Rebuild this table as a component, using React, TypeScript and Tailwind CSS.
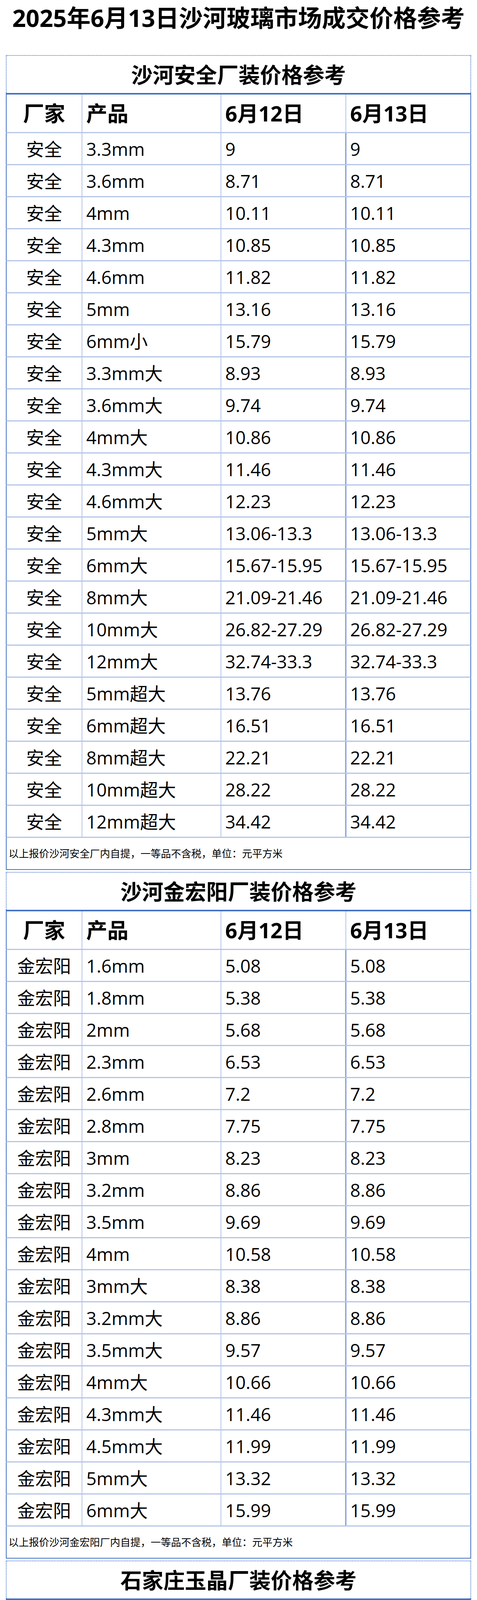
type Row = [string, string, string]

type Section = {
  title: string
  maker: string
  rows: Row[]
  note: string
}

const same = (p: string, v: string): Row => [p, v, v]

const SECTIONS: Section[] = [
  {
    title: "沙河安全厂装价格参考",
    maker: "安全",
    rows: [
      same("3.3mm", "9"),
      same("3.6mm", "8.71"),
      same("4mm", "10.11"),
      same("4.3mm", "10.85"),
      same("4.6mm", "11.82"),
      same("5mm", "13.16"),
      same("6mm小", "15.79"),
      same("3.3mm大", "8.93"),
      same("3.6mm大", "9.74"),
      same("4mm大", "10.86"),
      same("4.3mm大", "11.46"),
      same("4.6mm大", "12.23"),
      same("5mm大", "13.06-13.3"),
      same("6mm大", "15.67-15.95"),
      same("8mm大", "21.09-21.46"),
      same("10mm大", "26.82-27.29"),
      same("12mm大", "32.74-33.3"),
      same("5mm超大", "13.76"),
      same("6mm超大", "16.51"),
      same("8mm超大", "22.21"),
      same("10mm超大", "28.22"),
      same("12mm超大", "34.42"),
    ],
    note: "以上报价沙河安全厂内自提，一等品不含税，单位：元平方米",
  },
  {
    title: "沙河金宏阳厂装价格参考",
    maker: "金宏阳",
    rows: [
      same("1.6mm", "5.08"),
      same("1.8mm", "5.38"),
      same("2mm", "5.68"),
      same("2.3mm", "6.53"),
      same("2.6mm", "7.2"),
      same("2.8mm", "7.75"),
      same("3mm", "8.23"),
      same("3.2mm", "8.86"),
      same("3.5mm", "9.69"),
      same("4mm", "10.58"),
      same("3mm大", "8.38"),
      same("3.2mm大", "8.86"),
      same("3.5mm大", "9.57"),
      same("4mm大", "10.66"),
      same("4.3mm大", "11.46"),
      same("4.5mm大", "11.99"),
      same("5mm大", "13.32"),
      same("6mm大", "15.99"),
    ],
    note: "以上报价沙河金宏阳厂内自提，一等品不含税，单位：元平方米",
  },
  {
    title: "石家庄玉晶厂装价格参考",
    maker: "玉晶",
    rows: [
      ["4mm大", "10.66", "10.59"],
      ["4.3mm大", "11.46", "11.38"],
      ["5mm大", "13.32", "13.24"],
      ["6mm大", "15.99", "15.89"],
      ["7.2mm大", "19.19", "19.06"],
      ["7.5mm大", "19.98", "19.86"],
      ["8mm大", "21.5", "21.37"],
      ["10mm大", "27.12", "25.96"],
      ["12mm大", "33.1", "32.93"],
    ],
    note: "以上报价石家庄玉晶厂内自提，一等品不含税，单位：元平方米",
  },
]

function PriceTable({ section }: { section: Section }) {
  return (
    <div className="flex flex-col">
      <div className="h-[97px] flex items-center justify-center border-t-2 border-x-2 border-dotted border-[#4472c4]">
        <h2 className="text-[55px] font-bold leading-none">{section.title}</h2>
      </div>
      <div className="h-[4px] bg-[#4472c4]" />

      <div className="h-[99px] flex border-x-2 border-x-[#4472c4] border-b-[3px] border-b-[#b4c6e7] text-[54px] font-bold leading-none">
        <div className="w-[194px] flex items-center justify-center border-r-2 border-[#b4c6e7]">厂家</div>
        <div className="w-[356px] flex items-center pl-[10px] border-r-2 border-[#b4c6e7]">产品</div>
        <div className="w-[320px] flex items-center pl-[10px] border-r-2 border-[#b4c6e7]">6月12日</div>
        <div className="flex-1 flex items-center pl-[10px]">6月13日</div>
      </div>

      {section.rows.map(([product, d12, d13]) => (
        <div
          key={product}
          className="h-[82px] flex border-x-2 border-x-[#4472c4] border-b-[3px] border-b-[#b4c6e7] text-[46px] leading-none"
        >
          <div className="w-[194px] flex items-center justify-center border-r-2 border-[#b4c6e7]">{section.maker}</div>
          <div className="w-[356px] flex items-center pl-[10px] border-r-2 border-[#b4c6e7]">{product}</div>
          <div className="w-[320px] flex items-center pl-[10px] border-r-2 border-[#4472c4]">{d12}</div>
          <div className="flex-1 flex items-center pl-[10px]">{d13}</div>
        </div>
      ))}

      <div className="h-[82px] flex items-center pl-[5px] border-x-2 border-b-2 border-[#4472c4] text-[26px] leading-none">
        {section.note}
      </div>
    </div>
  )
}

export default function App() {
  return (
    <div className="w-[1222px] bg-white px-[15px] pb-[16px] text-black font-['Open_Sans','Noto_Sans_CJK_SC',sans-serif]">
      <h1 className="h-[91px] mb-[50px] flex items-center justify-center text-[61px] font-bold leading-none">
        2025年6月13日沙河玻璃市场成交价格参考
      </h1>
      <div className="flex flex-col gap-[5px]">
        {SECTIONS.map((s) => (
          <PriceTable key={s.title} section={s} />
        ))}
      </div>
    </div>
  )
}
